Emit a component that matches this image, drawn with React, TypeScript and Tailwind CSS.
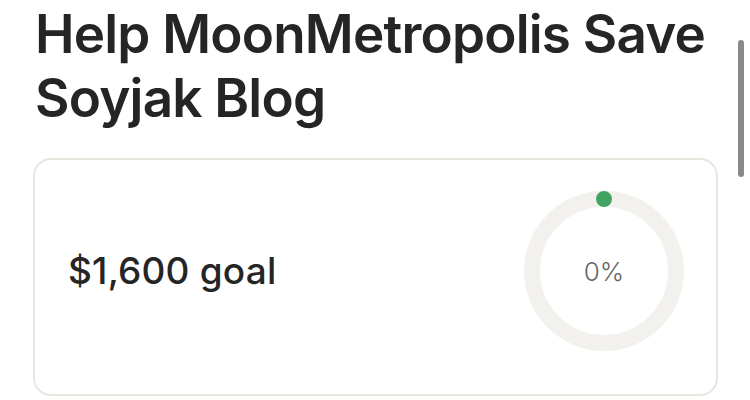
export default function App() {
  const pct = 0;
  const r = 72;
  const circ = 2 * Math.PI * r;

  return (
    <div className="relative w-[750px] h-[400px] overflow-hidden bg-white font-['Inter',sans-serif] text-[#252525]">
      <div className="pl-[33px] pr-[32px] pt-[2px]">
        <h1 className="pl-[2px] text-[53px] leading-[64px] font-semibold tracking-[-0.015em]">
          Help MoonMetropolis Save Soyjak Blog
        </h1>

        <div className="mt-[28px] flex items-center justify-between rounded-[18px] border-2 border-[#e8e6df] pl-[33px] pr-[32px] pt-[31px] pb-[43px]">
          <p className="text-[37px] font-medium tracking-[0.005em]">$1,600 goal</p>
          <div className="relative w-[160px] h-[160px]">
            <svg viewBox="0 0 160 160" className="w-full h-full -rotate-90">
              <circle cx="80" cy="80" r={r} fill="none" stroke="#f2f1ed" strokeWidth="16" />
              <circle
                cx="80"
                cy="80"
                r={r}
                fill="none"
                stroke="#42a463"
                strokeWidth="16"
                strokeLinecap="round"
                strokeDasharray={`${(pct / 100) * circ + 0.01} ${circ}`}
              />
            </svg>
            <span className="absolute inset-0 flex items-center justify-center text-[26px] font-light text-[#666666]">
              {pct}%
            </span>
          </div>
        </div>
      </div>

      {/* overlay scrollbar */}
      <div className="absolute right-[6px] top-[40px] w-[6px] h-[137px] rounded-full bg-[#8a8a8a]" />
    </div>
  );
}
